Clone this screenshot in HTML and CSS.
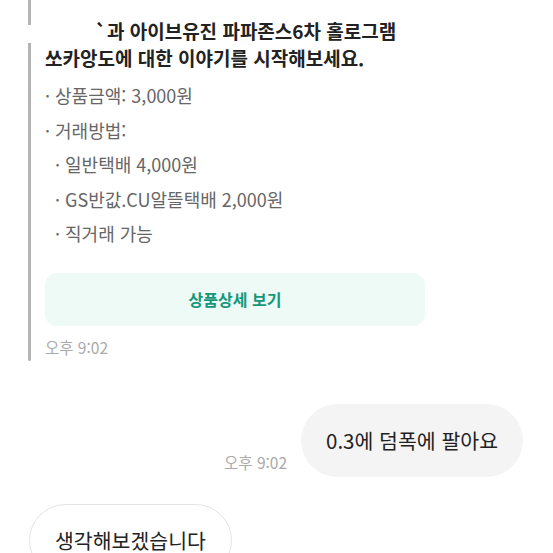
FILE: index.html
```html
<!DOCTYPE html>
<html lang="ko">
<head>
<meta charset="UTF-8" />
<meta name="viewport" content="width=device-width, initial-scale=1" />
<title>채팅</title>
<link rel="stylesheet" href="styles.css">
</head>
<body>
  <div class="chat">
    <div class="msg-in">
      <div class="rail">
        <span class="rail-top"></span>
        <span class="rail-main"></span>
      </div>
      <div class="card">
        <p class="lead"><span class="lead-first">`과 아이브유진 파파존스6차 홀로그램</span><br>쏘카앙도에 대한 이야기를 시작해보세요.</p>
        <ul class="info">
          <li>· 상품금액: 3,000원</li>
          <li>· 거래방법:</li>
          <li class="sub">· 일반택배 4,000원</li>
          <li class="sub">· GS반값.CU알뜰택배 2,000원</li>
          <li class="sub">· 직거래 가능</li>
        </ul>
        <button class="detail-btn">상품상세 보기</button>
        <div class="time">오후 9:02</div>
      </div>
    </div>

    <div class="row-out">
      <span class="time">오후 9:02</span>
      <div class="bubble bubble-out">0.3에 덤폭에 팔아요</div>
    </div>

    <div class="row-in">
      <div class="bubble bubble-in">생각해보겠습니다</div>
    </div>
  </div>
</body>
</html>
```

FILE: styles.css
```css
* {
  box-sizing: border-box;
}

body {
  margin: 0;
  background: #fff;
  font-family: "Noto Sans CJK KR", "Noto Sans", sans-serif;
  color: #222;
  overflow: hidden;
}

.chat {
  width: 553px;
  height: 553px;
}

/* incoming product card */
.msg-in {
  display: flex;
  padding-left: 28px;
}

.rail {
  display: flex;
  flex-direction: column;
  width: 3px;
  gap: 18px;
}

.rail-top {
  height: 25px;
  background: #b4b4b4;
}

.rail-main {
  flex: 1;
  background: #b4b4b4;
  border-radius: 0 0 2px 2px;
}

.card {
  padding: 17px 0 4px 14px;
}

.lead {
  margin: 0;
  font-size: 19px;
  font-weight: 700;
  line-height: 27px;
}

.lead-first {
  padding-left: 50px;
}

.info {
  list-style: none;
  margin: 7px 0 0;
  padding: 0;
  font-size: 18px;
  line-height: 34.5px;
  color: #666;
}

.info .sub {
  padding-left: 10px;
}

.detail-btn {
  display: block;
  width: 380px;
  height: 53px;
  margin-top: 22px;
  border: none;
  border-radius: 12px;
  background: #edfaf5;
  color: #17977a;
  font-family: inherit;
  font-size: 16px;
  font-weight: 700;
}

.time {
  margin-top: 11px;
  font-size: 15.5px;
  line-height: 20px;
  color: #aaa;
}

/* bubbles */
.bubble {
  height: 73px;
  padding: 0 25px;
  border-radius: 37px;
  font-size: 20.5px;
  line-height: 73px;
  color: #222;
  white-space: nowrap;
}

.row-out {
  display: flex;
  justify-content: flex-end;
  align-items: flex-end;
  gap: 14px;
  margin-top: 43px;
  padding-right: 30px;
}

.row-out .time {
  margin: 0 0 5px;
}

.bubble-out {
  background: #f4f4f4;
}

.row-in {
  display: flex;
  margin-top: 27px;
  padding-left: 29px;
}

.bubble-in {
  padding: 0 25px;
  background: #fff;
  border: 1px solid #e4e4e4;
  line-height: 71px;
}
```
